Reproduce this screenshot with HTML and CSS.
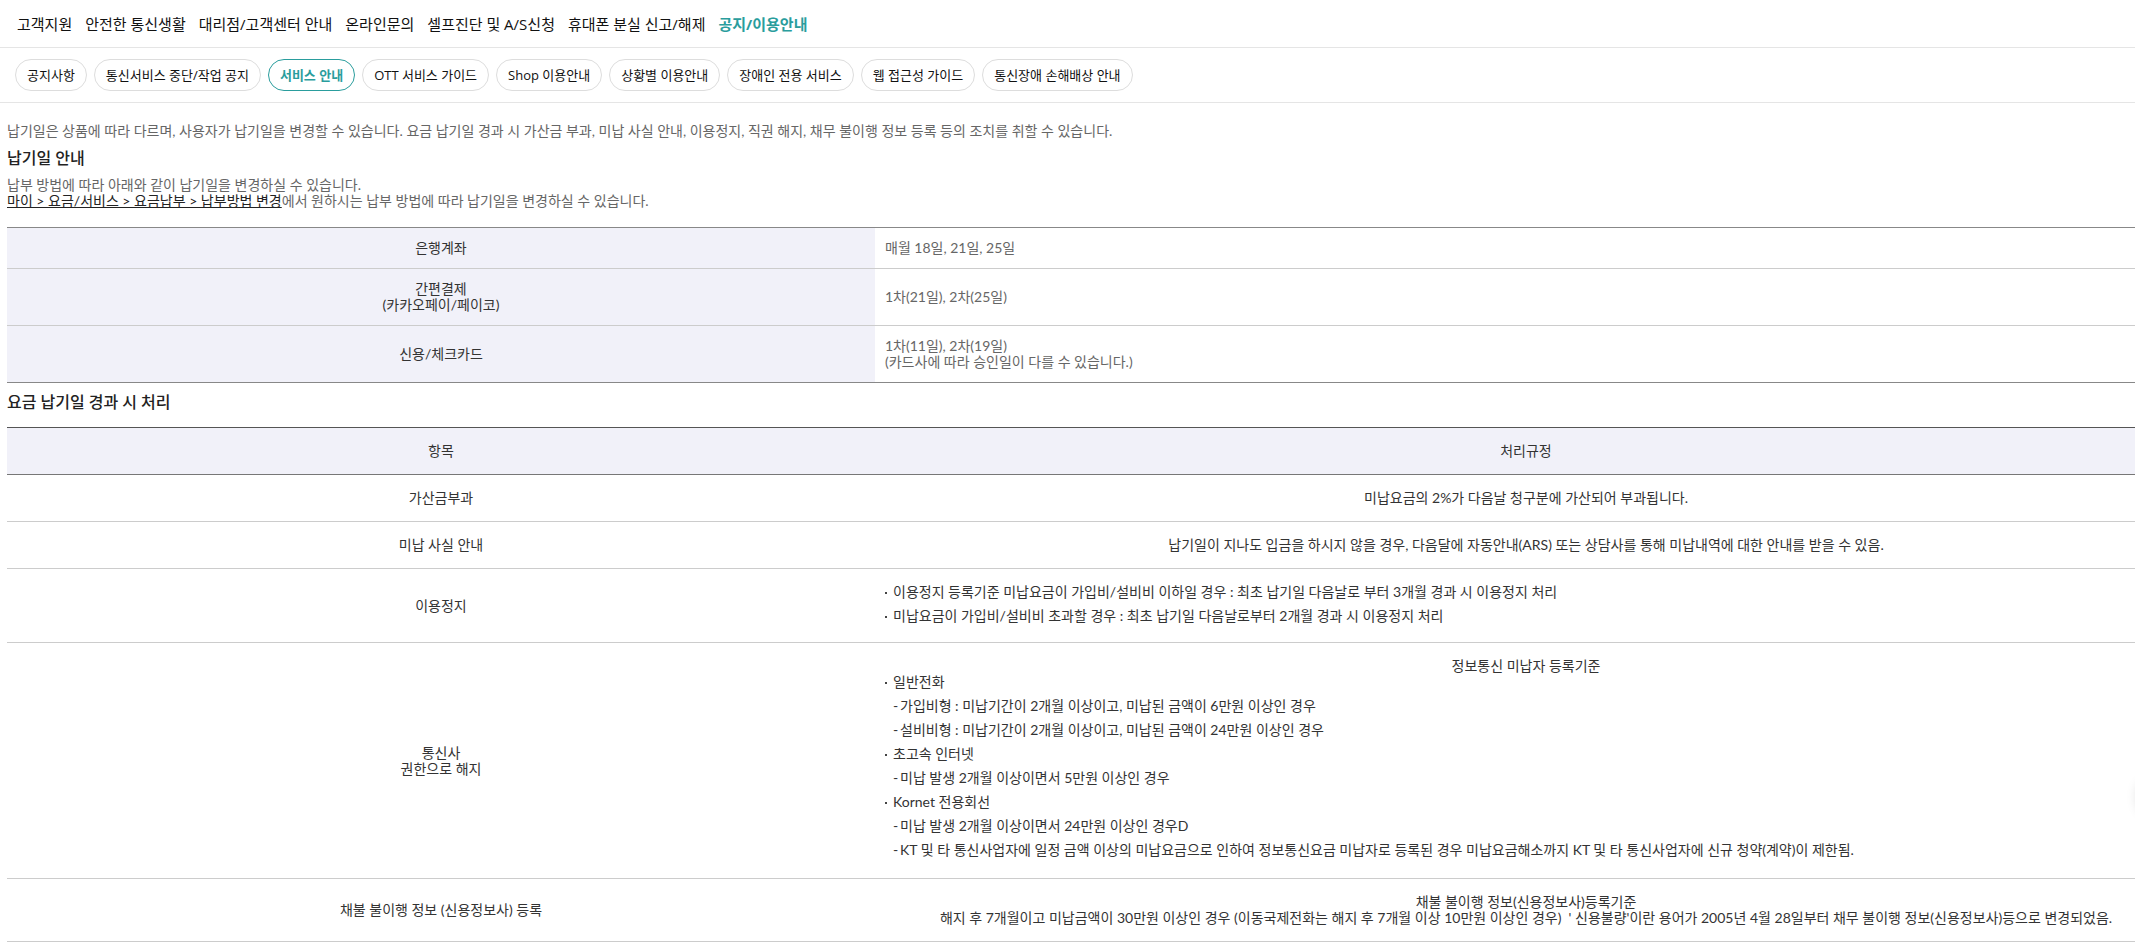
FILE: index.html
```html
<!DOCTYPE html>
<html lang="ko">
<head>
    <meta charset="UTF-8" />
    <title>서비스 안내</title>
    <link rel="stylesheet" href="styles.css">
</head>
<body>

<nav class="main-nav">
    <a href="#">고객지원</a>
    <a href="#">안전한 통신생활</a>
    <a href="#">대리점/고객센터 안내</a>
    <a href="#">온라인문의</a>
    <a href="#">셀프진단 및 A/S신청</a>
    <a href="#">휴대폰 분실 신고/해제</a>
    <a href="#" class="active">공지/이용안내</a>
</nav>

<nav class="sub-nav">
    <a href="#">공지사항</a>
    <a href="#">통신서비스 중단/작업 공지</a>
    <a href="#" class="active">서비스 안내</a>
    <a href="#">OTT 서비스 가이드</a>
    <a href="#">Shop 이용안내</a>
    <a href="#">상황별 이용안내</a>
    <a href="#">장애인 전용 서비스</a>
    <a href="#">웹 접근성 가이드</a>
    <a href="#">통신장애 손해배상 안내</a>
</nav>

<main>
    <p>납기일은 상품에 따라 다르며, 사용자가 납기일을 변경할 수 있습니다. 요금 납기일 경과 시 가산금 부과, 미납 사실 안내, 이용정지, 직권 해지, 채무 불이행 정보 등록 등의 조치를 취할 수 있습니다.</p>

    <h3>납기일 안내</h3>
    <p>납부 방법에 따라 아래와 같이 납기일을 변경하실 수 있습니다.<br>
        <a href="#">마이 &gt; 요금/서비스 &gt; 요금납부 &gt; 납부방법 변경</a>에서 원하시는 납부 방법에 따라 납기일을 변경하실 수 있습니다.</p>

    <table class="due-table">
        <tbody>
            <tr>
                <th scope="row">은행계좌</th>
                <td>매월 18일, 21일, 25일</td>
            </tr>
            <tr>
                <th scope="row">간편결제<br>(카카오페이/페이코)</th>
                <td>1차(21일), 2차(25일)</td>
            </tr>
            <tr>
                <th scope="row">신용/체크카드</th>
                <td>1차(11일), 2차(19일)<br>(카드사에 따라 승인일이 다를 수 있습니다.)</td>
            </tr>
        </tbody>
    </table>

    <h3>요금 납기일 경과 시 처리</h3>
    <table class="rule-table">
        <thead>
            <tr>
                <th scope="col">항목</th>
                <th scope="col">처리규정</th>
            </tr>
        </thead>
        <tbody>
            <tr>
                <td>가산금부과</td>
                <td>미납요금의 2%가 다음날 청구분에 가산되어 부과됩니다.</td>
            </tr>
            <tr>
                <td>미납 사실 안내</td>
                <td>납기일이 지나도 입금을 하시지 않을 경우, 다음달에 자동안내(ARS) 또는 상담사를 통해 미납내역에 대한 안내를 받을 수 있음.</td>
            </tr>
            <tr>
                <td>이용정지</td>
                <td>
                    <ul class="bullet-list">
                        <li>이용정지 등록기준 미납요금이 가입비/설비비 이하일 경우 : 최초 납기일 다음날로 부터 3개월 경과 시 이용정지 처리</li>
                        <li>미납요금이 가입비/설비비 초과할 경우 : 최초 납기일 다음날로부터 2개월 경과 시 이용정지 처리</li>
                    </ul>
                </td>
            </tr>
            <tr>
                <td>통신사<br>권한으로 해지</td>
                <td>
                    <p>정보통신 미납자 등록기준</p>
                    <ul class="bullet-list">
                        <li>일반전화
                            <ul class="dash-list">
                                <li>가입비형 : 미납기간이 2개월 이상이고, 미납된 금액이 6만원 이상인 경우</li>
                                <li>설비비형 : 미납기간이 2개월 이상이고, 미납된 금액이 24만원 이상인 경우</li>
                            </ul>
                        </li>
                        <li>초고속 인터넷
                            <ul class="dash-list">
                                <li>미납 발생 2개월 이상이면서 5만원 이상인 경우</li>
                            </ul>
                        </li>
                        <li>Kornet 전용회선
                            <ul class="dash-list">
                                <li>미납 발생 2개월 이상이면서 24만원 이상인 경우D</li>
                                <li>KT 및 타 통신사업자에 일정 금액 이상의 미납요금으로 인하여 정보통신요금 미납자로 등록된 경우 미납요금해소까지 KT 및 타 통신사업자에 신규 청약(계약)이 제한됨.</li>
                            </ul>
                        </li>
                    </ul>
                </td>
            </tr>
            <tr>
                <td>채불 불이행 정보 (신용정보사) 등록</td>
                <td>채불 불이행 정보(신용정보사)등록기준<br>해지 후 7개월이고 미납금액이 30만원 이상인 경우 (이동국제전화는 해지 후 7개월 이상 10만원 이상인 경우)&nbsp; ' 신용불량'이란 용어가 2005년 4월 28일부터 채무 불이행 정보(신용정보사)등으로 변경되었음.</td>
            </tr>
        </tbody>
    </table>
</main>

<button type="button" class="floating-btn" aria-label="맨 위로"></button>

</body>
</html>
```
FILE: styles.css
```css
body {
    margin: 0;
    overflow: hidden;
    background-color: #fff;
    color: #666;
    font-family: Lato, "Noto Sans CJK KR", sans-serif;
    font-size: 14px;
    line-height: 16px;
}
nav {
    display: flex;
    align-items: center;
    border-bottom: 1px solid #e5e5e5;
    font-family: "Open Sans", "Noto Sans CJK KR", sans-serif;
}
nav a {
    color: #111;
    text-decoration: none;
    white-space: nowrap;
}
.main-nav {
    gap: 13px;
    padding: 12px 17px 11px;
    font-size: 15px;
    line-height: 24px;
}
.main-nav .active {
    color: #2a9d9d;
    font-weight: bold;
}
.sub-nav {
    gap: 7px;
    padding: 11px 15px;
    font-size: 13px;
}
.sub-nav a {
    padding: 7px 11px;
    border: 1px solid #ddd;
    border-radius: 16px;
}
.sub-nav .active {
    border-color: #2a9d9d;
    color: #2a9d9d;
    font-weight: bold;
}
main {
    padding: 20px 7px 0;
}
p {
    margin: 0;
}
p a {
    color: #222;
}
h3 {
    margin: 0;
    padding: 8px 0;
    color: #222;
    font-size: 16px;
    font-weight: 500;
    line-height: 22px;
}
/* tables run past the right edge of the page */
table {
    width: calc(100% + 49px);
    table-layout: fixed;
    border-collapse: collapse;
}
th {
    background-color: #f1f1f9;
    color: #333;
    font-weight: normal;
}
th:first-child,
td:first-child {
    width: 40%;
}
th,
td {
    box-sizing: border-box;
    border-bottom: 1px solid #ccc;
}
.due-table {
    margin-top: 18px;
    border-top: 1px solid #888;
}
.due-table th,
.due-table td {
    padding: 12px 10px;
}
.due-table tr:last-child > * {
    border-bottom-color: #888;
}
.rule-table {
    margin-top: 6px;
    border-top: 1px solid #555;
    color: #333;
    text-align: center;
}
.rule-table th,
.rule-table td {
    padding: 15px 10px;
}
.rule-table th {
    border-bottom-color: #777;
}
ul {
    margin: 0;
    padding: 0;
    list-style: none;
    text-align: left;
}
li {
    margin-top: 8px;
}
.bullet-list {
    padding-bottom: 3px;
}
.bullet-list > li {
    padding-left: 8px;
}
.bullet-list > li:first-child {
    margin-top: 0;
}
.bullet-list > li::before {
    content: "";
    float: left;
    width: 2px;
    height: 2px;
    margin: 8px 0 0 -8px;
    background-color: #444;
}
p + .bullet-list {
    padding-bottom: 5px;
}
.dash-list > li {
    padding-left: 7px;
}
.dash-list > li::before {
    content: "-";
    float: left;
    margin-left: -7px;
}
.floating-btn {
    position: fixed;
    right: -46px;
    bottom: 128px;
    width: 44px;
    height: 44px;
    padding: 0;
    border: none;
    border-radius: 50%;
    background-color: #fff;
    box-shadow: 0 0 12px rgba(0, 0, 0, 0.15);
}
```
